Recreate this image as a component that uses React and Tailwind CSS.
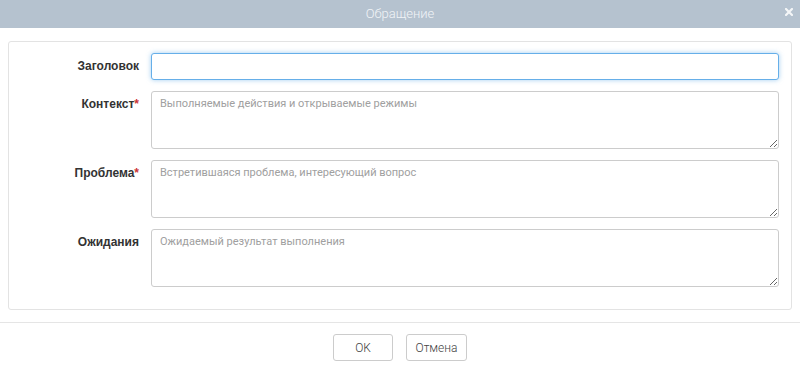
import React from "react";

const Field = ({ label, required, placeholder, tall, focused }) => (
  <div className="flex items-start">
    <label className="w-[130px] shrink-0 text-right text-[12px] font-bold text-[#333] pt-[6px] leading-[14px] font-['Liberation_Sans',sans-serif]">
      {label}
      {required && <span className="text-[#c33]">*</span>}
    </label>
    {tall ? (
      <textarea
        placeholder={placeholder}
        className="ml-[12px] w-[628px] h-[58px] rounded-[3px] border border-[#ccc] bg-white px-[8px] py-[4px] text-[11px] leading-[16px] text-[#555] placeholder:text-[#a0a0a0] outline-none resize-y font-['Roboto',sans-serif]"
      />
    ) : (
      <input
        autoFocus={focused}
        className="ml-[12px] w-[628px] h-[27px] rounded-[3px] border border-[#66afe9] bg-white px-[8px] text-[12px] text-[#555] outline-none shadow-[0_0_5px_rgba(102,175,233,0.6)] font-['Roboto',sans-serif]"
      />
    )}
  </div>
);

export default function App() {
  return (
    <div className="w-[800px] h-[372px] bg-white flex flex-col font-['Roboto',sans-serif]">
      <div className="h-[28px] bg-[#b5c2cf] flex items-center justify-center relative">
        <span className="text-[13px] text-[#f1f4f7] font-light">Обращение</span>
        <svg className="absolute right-[7px] top-[8px]" width="8" height="8" viewBox="0 0 8 8">
          <path d="M1 1L7 7M7 1L1 7" stroke="#f4f6f8" strokeWidth="2.2" strokeLinecap="square" />
        </svg>
      </div>
      <div className="px-[8px] pt-[13px]">
        <div className="border border-[#e3e3e3] rounded-[3px] pt-[11px] pb-[22px] flex flex-col gap-[11px]">
          <Field label="Заголовок" focused />
          <Field label="Контекст" required tall placeholder="Выполняемые действия и открываемые режимы" />
          <Field label="Проблема" required tall placeholder="Встретившаяся проблема, интересующий вопрос" />
          <Field label="Ожидания" tall placeholder="Ожидаемый результат выполнения" />
        </div>
      </div>
      <div className="mt-[12px] border-t border-[#e5e5e5] flex justify-center gap-[13px] pt-[11px]">
        <button className="w-[60px] h-[27px] rounded-[3px] border border-[#ccc] bg-white text-[12px] font-light text-[#444]">OK</button>
        <button className="w-[61px] h-[27px] rounded-[3px] border border-[#ccc] bg-white text-[12px] font-light text-[#444]">Отмена</button>
      </div>
    </div>
  );
}
